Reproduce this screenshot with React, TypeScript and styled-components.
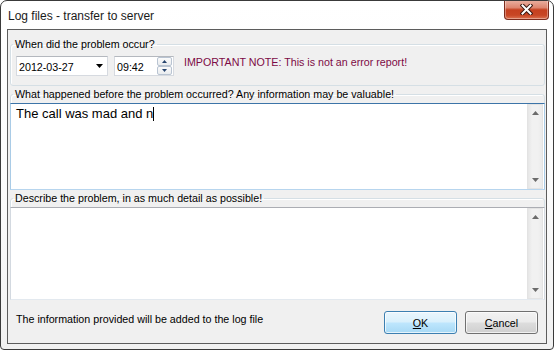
import React from 'react';
import styled, { createGlobalStyle } from 'styled-components';

const GlobalStyle = createGlobalStyle`
  html, body {
    margin: 0;
    padding: 0;
    background: #ffffff;
  }
  body {
    font-family: "Liberation Sans", Arial, sans-serif;
    -webkit-font-smoothing: antialiased;
  }
`;

const Window = styled.div`
  width: 554px;
  height: 350px;
  box-sizing: border-box;
  border: 1px solid #3a3a3a;
  border-radius: 7px 7px 4px 4px;
  background: linear-gradient(180deg, #ffffff 0%, #fbfbfb 55%, #f1f1f1 100%);
  display: flex;
  flex-direction: column;
  overflow: hidden;
`;

const TitleBar = styled.div`
  height: 28px;
  display: flex;
  align-items: flex-start;
  padding-left: 7px;
  flex-shrink: 0;
`;

const Title = styled.div`
  margin-top: 8px;
  font-size: 12px;
  line-height: 14px;
  color: #1a1a1a;
`;

const CloseButton = styled.div`
  margin: -1px 4px 0 auto;
  width: 45px;
  height: 20px;
  box-sizing: border-box;
  border: 1px solid #7b2c1d;
  border-top: none;
  border-radius: 0 0 4px 4px;
  background: linear-gradient(
    180deg,
    #eab2a3 0%,
    #dd8670 40%,
    #c5401f 52%,
    #c84624 80%,
    #dc7352 100%
  );
  box-shadow: inset 0 0 0 1px rgba(255, 255, 255, 0.35);
  display: flex;
  align-items: center;
  justify-content: center;
`;

const Client = styled.div`
  flex: 1;
  margin: 0 6px 5px 6px;
  border: 1px solid #5c5c5c;
  background: #f0f0f0;
  display: flex;
  flex-direction: column;
  padding: 8px 1px 0 2px;
  gap: 2px;
  font-size: 10.7px;
  color: #000;
`;

const Group = styled.fieldset<{ $pad: number; $bottom: number; $top: number }>`
  margin: 0;
  min-width: 0;
  border: 1px solid #d5dfe5;
  border-radius: 3px;
  padding: ${({ $top, $pad, $bottom }) => `${$top}px ${$pad}px ${$bottom}px ${$pad}px`};
  box-shadow: inset 1px 1px 0 #ffffff;
`;

const Legend = styled.legend<{ $shift: number }>`
  padding: 0 2px;
  margin-left: ${({ $shift }) => $shift}px;
  font-size: 10.7px;
  line-height: 12px;
  color: #000;
`;

const DateRow = styled.div`
  display: flex;
  align-items: flex-start;
`;

const InputBox = styled.div<{ $width: number }>`
  width: ${({ $width }) => $width}px;
  height: 20px;
  box-sizing: border-box;
  border: 1px solid #d6dae0;
  border-top-color: #b4b8be;
  background: #fff;
  display: flex;
  align-items: center;
  padding-left: 2px;
  font-size: 10.7px;
`;

const BoxText = styled.span`
  flex: 1;
  padding-top: 1px;
`;

const DropArrow = styled.svg`
  margin-right: 4px;
`;

const Spinner = styled.div`
  width: 15px;
  height: 18px;
  margin-right: 1px;
  display: flex;
  flex-direction: column;
`;

const SpinButton = styled.div`
  flex: 1;
  box-sizing: border-box;
  border: 1px solid #b9c4d2;
  border-radius: 2px;
  background: linear-gradient(180deg, #fbfbfb 0%, #e9ecef 100%);
  display: flex;
  align-items: center;
  justify-content: center;
`;

const Note = styled.div`
  margin-left: 10px;
  line-height: 12px;
  color: #7d0a45;
`;

const TextBox = styled.div<{ $height: number; $focused?: boolean }>`
  height: ${({ $height }) => $height}px;
  box-sizing: border-box;
  margin: 0 -1px -1px -1px;
  background: #fff;
  border: 1px solid ${({ $focused }) => ($focused ? '#a9cbe6' : '#d3d9e0')};
  border-top-color: ${({ $focused }) => ($focused ? '#3c74a8' : '#abadb3')};
  border-bottom-color: ${({ $focused }) => ($focused ? '#b7d5ee' : '#e3e9ef')};
  display: flex;
`;

const TextContent = styled.div`
  flex: 1;
  padding: 2px 5px;
  font-size: 13px;
  line-height: 15px;
  color: #000;
  display: flex;
  align-items: flex-start;
`;

const Caret = styled.span`
  display: inline-block;
  width: 1px;
  height: 14px;
  background: #000;
  margin-left: 0px;
  margin-top: 1px;
`;

const ScrollBar = styled.div`
  width: 16px;
  margin-right: 1px;
  box-sizing: border-box;
  border: 1px solid #e3e3e3;
  background: linear-gradient(90deg, #e6e6e6 0%, #f1f1f1 30%, #f1f1f1 70%, #ebebeb 100%);
  display: flex;
  flex-direction: column;
  justify-content: space-between;
`;

const ScrollArrow = styled.div`
  height: 16px;
  display: flex;
  align-items: center;
  justify-content: center;
`;

const Footer = styled.div`
  flex: 1;
  display: flex;
  align-items: center;
  padding: 0 7px 0 6px;
`;

const FooterText = styled.div`
  flex: 1;
  line-height: 13px;
  margin-bottom: 6px;
`;

const Button = styled.div<{ $default?: boolean }>`
  width: 73px;
  height: 23px;
  box-sizing: border-box;
  margin-left: ${({ $default }) => ($default ? '0' : '8px')};
  border: 1px solid ${({ $default }) => ($default ? '#3c7fb1' : '#707070')};
  border-radius: 3px;
  background: ${({ $default }) =>
    $default
      ? 'linear-gradient(180deg, #eaf6fd 0%, #d9f0fc 48%, #bee6fd 52%, #a7d9f5 100%)'
      : 'linear-gradient(180deg, #f2f2f2 0%, #ebebeb 48%, #dddddd 52%, #cfcfcf 100%)'};
  box-shadow: inset 0 0 0 1px rgba(255, 255, 255, 0.7);
  display: flex;
  align-items: center;
  justify-content: center;
  font-size: 10.7px;
  color: #000;
  padding-top: 1px;
`;

const Mnemonic = styled.span`
  text-decoration: underline;
`;

const Triangle: React.FC<{ up?: boolean; color: string; w?: number; h?: number }> = ({
  up,
  color,
  w = 7,
  h = 4,
}) => (
  <svg width={w} height={h} viewBox={`0 0 ${w} ${h}`}>
    <polygon points={up ? `0,${h} ${w},${h} ${w / 2},0` : `0,0 ${w},0 ${w / 2},${h}`} fill={color} />
  </svg>
);

const MemoBox: React.FC<{ height: number; focused?: boolean; children?: React.ReactNode }> = ({
  height,
  focused,
  children,
}) => (
  <TextBox $height={height} $focused={focused}>
    <TextContent>{children}</TextContent>
    <ScrollBar>
      <ScrollArrow>
        <Triangle up color="#6b6b6b" />
      </ScrollArrow>
      <ScrollArrow>
        <Triangle color="#6b6b6b" />
      </ScrollArrow>
    </ScrollBar>
  </TextBox>
);

export default function App() {
  return (
    <>
      <GlobalStyle />
      <Window>
        <TitleBar>
          <Title>Log files - transfer to server</Title>
          <CloseButton>
            <svg width="13" height="11" viewBox="0 0 13 11">
              <path d="M2.5 1.5 L10.5 9.5 M10.5 1.5 L2.5 9.5" stroke="#3a1710" strokeWidth="4" strokeLinecap="square" />
              <path d="M2.5 1.5 L10.5 9.5 M10.5 1.5 L2.5 9.5" stroke="#ffffff" strokeWidth="2" strokeLinecap="square" />
            </svg>
          </CloseButton>
        </TitleBar>
        <Client>
          <Group $pad={5} $top={6} $bottom={9}>
            <Legend $shift={-3}>When did the problem occur?</Legend>
            <DateRow>
              <InputBox $width={92}>
                <BoxText>2012-03-27</BoxText>
                <DropArrow width="7" height="4" viewBox="0 0 7 4">
                  <polygon points="0,0 7,0 3.5,4" fill="#000" />
                </DropArrow>
              </InputBox>
              <InputBox $width={60} style={{ marginLeft: 6 }}>
                <BoxText>09:42</BoxText>
                <Spinner>
                  <SpinButton>
                    <Triangle up color="#27456f" w={5} h={3} />
                  </SpinButton>
                  <SpinButton>
                    <Triangle color="#27456f" w={5} h={3} />
                  </SpinButton>
                </Spinner>
              </InputBox>
              <Note>IMPORTANT NOTE: This is not an error report!</Note>
            </DateRow>
          </Group>
          <Group $pad={0} $top={3} $bottom={0}>
            <Legend $shift={2}>
              What happened before the problem occurred? Any information may be valuable!
            </Legend>
            <MemoBox height={87} focused>
              The call was mad and n
              <Caret />
            </MemoBox>
          </Group>
          <Group $pad={0} $top={3} $bottom={0}>
            <Legend $shift={2}>Describe the problem, in as much detail as possible!</Legend>
            <MemoBox height={93} />
          </Group>
          <Footer>
            <FooterText>The information provided will be added to the log file</FooterText>
            <Button $default>
              <span>
                <Mnemonic>O</Mnemonic>K
              </span>
            </Button>
            <Button>
              <span>
                <Mnemonic>C</Mnemonic>ancel
              </span>
            </Button>
          </Footer>
        </Client>
      </Window>
    </>
  );
}
